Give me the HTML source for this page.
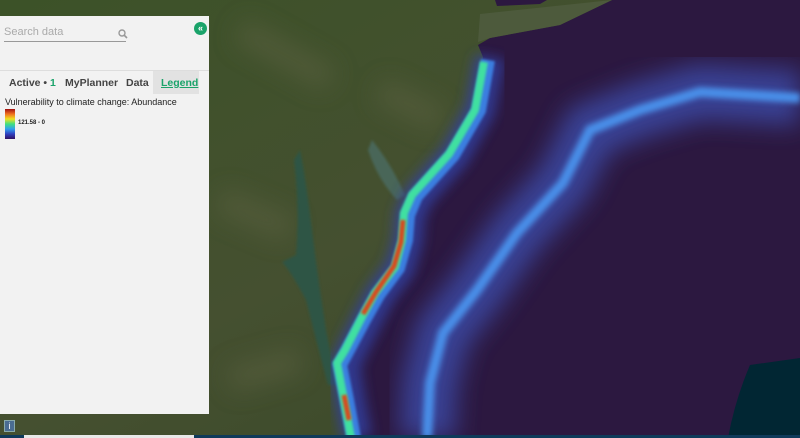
<!DOCTYPE html><html><head><style>
body{margin:0;width:800px;height:438px;overflow:hidden;position:relative;font-family:"Liberation Sans",sans-serif;background:#3b4a28}
svg{position:absolute;left:0;top:0}
.panel{position:absolute;left:0;top:16px;width:209px;height:398px;background:#f2f2f2}
.search{position:absolute;left:4px;top:10px;width:122px;height:15px;border-bottom:1px solid #999;color:#aaa;font-size:11px}
.tabs{position:absolute;left:0;top:54px;width:209px;height:23px;border-top:1px solid #ddd;font-size:10.5px;font-weight:bold;color:#444}
.tabs span{position:absolute;top:6px}
</style></head><body>
<svg width="800" height="438">
<defs>
<filter id="b"><feGaussianBlur stdDeviation="12"/></filter>
<filter id="b2"><feGaussianBlur stdDeviation="3"/></filter>
<filter id="b3"><feGaussianBlur stdDeviation="1.2"/></filter>
<filter id="b4"><feGaussianBlur stdDeviation="6"/></filter>
<linearGradient id="land" x1="0" y1="0" x2="1" y2="1"><stop offset="0" stop-color="#3c5228"/><stop offset=".5" stop-color="#455030"/><stop offset="1" stop-color="#354626"/></linearGradient>
</defs>
<rect width="800" height="438" fill="url(#land)"/>
<path d="M240 30 L330 80 M220 200 L290 230 M230 380 L300 360 M380 90 L440 120" stroke="#5a6040" stroke-width="25" filter="url(#b)" opacity=".6"/>
<path d="M300 150 Q306 180 312 230 Q318 280 326 330 Q332 360 338 385 L328 385 Q316 340 306 300 Q290 270 282 262 L296 255 Q300 210 294 160 Z" fill="#2d5545" filter="url(#b3)"/>
<path d="M372 140 Q392 165 405 195 L397 200 Q378 180 368 150 Z" fill="#4a6658" filter="url(#b3)"/>
<path d="M612 0 L800 0 L800 438 L350 438 L343 400 L335 362 L343 350 L360 317 L373 293 L393 267 L400 240 L402 213 L410 193 L447 153 L473 110 L483 57 L478 45 L490 38 L560 25 Z" fill="#2c1840"/>
<path d="M495 0 L547 0 L540 4 L497 6 Z" fill="#2c1840"/>
<path d="M480 14 L612 0 L560 25 L490 38 L478 42 Z" fill="#4d5a3c"/>
<path d="M750 365 L800 358 L800 438 L728 438 Q735 400 750 365 Z" fill="#012633"/>
<path d="M800 98 L700 92 L640 110 L590 130 L563 183 L517 233 L477 290 L443 333 L430 383 L427 438" fill="none" stroke="#3c4fb0" stroke-width="55" filter="url(#b)" opacity=".75"/>
<path d="M800 98 L700 92 L640 110 L590 130 L563 183 L517 233 L477 290 L443 333 L430 383 L427 438" fill="none" stroke="#4a90ea" stroke-width="10" filter="url(#b2)"/>
<path d="M490 57 L480 110 L455 155 L418 197 L410 215 L408 240 L400 268 L380 295 L368 318 L352 350 L345 365 L350 400 L357 438" fill="none" stroke="#3040a0" stroke-width="30" filter="url(#b4)" opacity=".8"/>
<path d="M488 60 L479 110 L453 155 L416 196 L408 215 L406 240 L398 268 L378 295 L365 318 L348 350 L340 365 L347 400 L354 438" fill="none" stroke="#3a7ee0" stroke-width="14" filter="url(#b3)"/>
<path d="M484 62 L475 110 L449 154 L412 195 L404 213 L402 240 L395 267 L375 293 L362 317 L345 350 L337 363 L344 400 L351 438" fill="none" stroke="#40e0a0" stroke-width="8" filter="url(#b3)"/>
<path d="M403 220 L401 242 L394 266 L376 292 L363 314 M344 395 L349 420" fill="none" stroke="#d84a1a" stroke-width="5" filter="url(#b3)"/>
<rect x="0" y="435" width="800" height="3" fill="#0f3a5a"/>
<rect x="24" y="435" width="170" height="3" fill="#e8e8e8"/>
</svg>
<div class="panel">
<div class="search">Search data<svg width="10" height="10" style="left:114px;top:3px" viewBox="0 0 10 10"><circle cx="4" cy="4" r="3" fill="none" stroke="#999" stroke-width="1.4"/><path d="M6 6 L9 9" stroke="#999" stroke-width="1.6"/></svg></div>
<div style="position:absolute;left:194px;top:6px;width:13px;height:13px;border-radius:50%;background:#1aa36a;color:#fff;font-size:9px;line-height:13px;text-align:center;font-weight:bold">«</div>
<div class="tabs">
<span style="left:9px">Active • <b style="color:#1aa36a">1</b></span>
<span style="left:65px">MyPlanner</span>
<span style="left:126px">Data</span>
<div style="position:absolute;left:153px;top:0;width:46px;height:23px;background:#e2e2e2"></div>
<span style="left:161px;color:#1aa36a;text-decoration:underline">Legend</span>
</div>
<div style="position:absolute;left:5px;top:81px;font-size:9px;color:#222">Vulnerability to climate change: Abundance</div>
<div style="position:absolute;left:5px;top:93px;width:10px;height:30px;background:linear-gradient(#a01010,#f07020,#f0e020,#40e080,#30a0f0,#3040c0,#301060)"></div>
<div style="position:absolute;left:18px;top:104px;font-size:6px;font-weight:bold;color:#222">121.58 - 0</div>
</div>
<div style="position:absolute;left:4px;top:420px;width:11px;height:12px;background:#4a6c92;border:1px solid #8aa;box-sizing:border-box;color:#fff;font-size:9px;text-align:center;line-height:11px">i</div>
</body></html>
